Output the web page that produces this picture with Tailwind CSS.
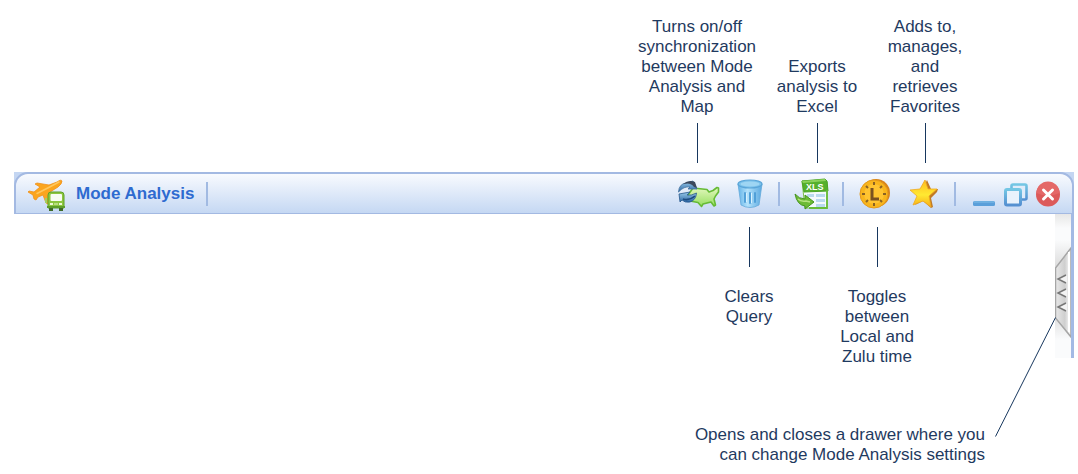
<!DOCTYPE html>
<html lang="en">
<head>
<meta charset="utf-8">
<meta name="viewport" content="width=device-width, initial-scale=1">
<title>Mode Analysis toolbar</title>
<script src="https://cdn.jsdelivr.net/npm/@tailwindcss/browser@4"></script>
</head>
<body class="bg-white font-['Liberation_Sans',Arial,sans-serif] text-[17px] leading-5 text-[#1f3a60]">
<main class="flex flex-col">
  <!-- Callouts above the toolbar -->
  <section class="flex h-[172px] items-end justify-end pr-[113px] pb-[9px] text-center">
    <div class="flex w-32 flex-col items-center gap-1.5">
      <p>Turns on/off<br>synchronization<br>between Mode<br>Analysis and<br>Map</p>
      <span class="h-10 w-px bg-[#17375e]"></span>
    </div>
    <div class="flex w-28 flex-col items-center gap-1.5">
      <p>Exports<br>analysis to<br>Excel</p>
      <span class="h-10 w-px bg-[#17375e]"></span>
    </div>
    <div class="ml-3 flex w-20 flex-col items-center gap-1.5">
      <p>Adds to,<br>manages,<br>and<br>retrieves<br>Favorites</p>
      <span class="h-10 w-px bg-[#17375e]"></span>
    </div>
  </section>

  <!-- Toolbar -->
  <header class="mr-1 ml-3.5 bg-[#c4d6f2]">
    <div class="flex h-[42px] items-center rounded-t-[14px] border-x-2 border-t-2 border-b border-[#a3b9e2] bg-linear-to-b from-[#f8fafe] to-[#c5d8f3] pr-3 pl-3">
      <svg class="h-[34px] w-[38px] shrink-0" viewBox="0 0 38 34" aria-hidden="true">
        <path d="M29 5Q33 2 34 4 34 7 30 10L22 15 20 27 18 26 15 18 10 20 8 23 6 22 5 18 0 15 1 14 6 15 12 10 7 7 9 6 21 8Z" fill="#fba51f" stroke="#f0901a" stroke-width=".8" stroke-linejoin="round"/>
        <path d="M9 16.500Q20 11 31 5" fill="none" stroke="#ffc75e" stroke-width="1.500" stroke-linecap="round"/>
        <path d="M20 31V18q0-3 3-3h10q3 0 3 3v13Z" fill="#8cc63f" stroke="#5fa02a" stroke-linejoin="round"/>
        <rect x="22.500" y="17" width="11.500" height="7" rx="1" fill="#f8fcf3"/>
        <path d="M17 21h2v5h-2z" fill="#a2cf62"/>
        <path d="M22 27h3m6 0h3" stroke="#eef9d6" stroke-width="2"/>
        <path d="M26 27h4" stroke="#c7e69a" stroke-width="1.500"/>
        <path d="M19 29h18v2H19Z" fill="#5c9d29"/>
        <path d="M21 31h4v3h-4zm10 0h4v3h-4z" fill="#3f6a28"/>
      </svg>
      <h1 class="ml-2.5 text-[17px] leading-5 font-bold whitespace-nowrap text-[#2e6bd0]">Mode Analysis</h1>
      <span class="ml-3 h-6 w-0.5 bg-[#a1bae2]"></span>

      <div class="ml-auto flex items-center">
        <button type="button" aria-label="Synchronize map" class="h-7 w-[42px]">
          <svg class="h-7 w-[42px]" viewBox="0 0 42 28">
            <defs><linearGradient id="land" x2="0" y2="1"><stop stop-color="#e3f7bd"/><stop offset="1" stop-color="#96df60"/></linearGradient><linearGradient id="arr" x2="0" y2="1"><stop stop-color="#9bcbea"/><stop offset="1" stop-color="#2b66a4"/></linearGradient></defs>
            <path d="M15 8 29 9.500 31 12 35 10.500 39 7.500 40.500 8 40.500 12 37.500 16 36 19 37.500 25 36 26 33 22 29 23 25 24 23.500 26.500 20 22.500 12 21 10 15Z" fill="url(#land)" stroke="#66bb35" stroke-width="1.600" stroke-linejoin="round"/>
            <path d="M.5 12Q1 4 8 3L15 1 19 9 10 9 12 7Q6 6 .5 12Z" fill="url(#arr)" stroke="#3d6d9c" stroke-width=".8"/>
            <path d="M5 4Q11-1 17 2l2 6-3-1Q13 2 5 4Z" fill="#3b485c"/>
            <path d="M1 14 12 12 9 15Q13 16 18.500 13 18 20 12 22 7 23 4 20L2 22Z" fill="url(#arr)" stroke="#25578d" stroke-width=".8"/>
            <path d="M5 19Q11 21 17 16" fill="none" stroke="#1d4a80" stroke-width="1.600"/>
          </svg>
        </button>
        <button type="button" aria-label="Clear query" class="ml-[17px] h-[30px] w-[26px]">
          <svg class="h-[30px] w-[26px]" viewBox="0 0 26 30">
            <defs><linearGradient id="bin"><stop stop-color="#62b3e8"/><stop offset=".4" stop-color="#b3e2fb"/><stop offset="1" stop-color="#5ba9e0"/></linearGradient></defs>
            <path d="M1 5 4 26Q13 31 22 26L25 5Z" fill="url(#bin)" stroke="#64a9db" stroke-width=".8"/>
            <ellipse cx="13" cy="5" rx="12" ry="4" fill="#7cc2eb" stroke="#5aa5d8" stroke-width="1.200"/>
            <ellipse cx="13" cy="5" rx="9.500" ry="2.600" fill="#9ed5f3"/>
            <path d="M8 14v9M13 14v10M18 14v9" fill="none" stroke="#4b9cd6" stroke-width="1.800" stroke-linecap="round"/>
            <path d="M9.500 14v9M14.500 14v10" stroke="#d8f2ff"/>
          </svg>
        </button>
        <span class="ml-[15px] h-6 w-0.5 bg-[#a1bae2]"></span>
        <button type="button" aria-label="Export to Excel" class="ml-3.5 h-8 w-9">
          <svg class="h-8 w-9" viewBox="0 0 36 32">
            <path d="M8 3 33 4v26L11 30Z" fill="#f4f9fd" stroke="#7cc04c"/>
            <path d="M8 3 31 1l2 2 1 10-24 1Z" fill="#55b02c" stroke="#4ba326"/>
            <path d="M8 3 31 1l1 2-23 2Z" fill="#8bd25a"/>
            <path d="M13 16h7v3h-7zm9 0h9v3h-9zm0 5h9v3h-9zm0 5h9v3h-9z" fill="#b9d9ef"/>
            <path d="M33 12v18H15" fill="none" stroke="#69bd39" stroke-width="1.800"/>
            <text x="12" y="12" font-family="Liberation Sans" font-size="9" font-weight="700" fill="#fff">XLS</text>
            <path d="M1 16Q5 21 11 21v-4l9 7-9 7v-3Q3 27 1 16Z" fill="#6dbb34" stroke="#46941f"/>
            <path d="M4 21q3 3 8 2l4 1" fill="none" stroke="#b5e37c" stroke-width="1.500"/>
          </svg>
        </button>
        <span class="ml-3 h-6 w-0.5 bg-[#a1bae2]"></span>
        <button type="button" aria-label="Toggle local and Zulu time" class="ml-[15px] size-8">
          <svg class="size-8" viewBox="0 0 32 32">
            <circle cx="17" cy="15" r="14" fill="#d8841a"/>
            <circle cx="15" cy="16" r="14" fill="#f8b51d" stroke="#e49a1c"/>
            <circle cx="15" cy="16" r="10" fill="#ffc431"/>
            <path d="M15 4v3M15 25v3M3 16h3M24 16h3M7 8l2 2M23 8l-2 2M7 24l2-2M23 24l-2-2" stroke="#8a6225" stroke-width="2"/>
            <path d="M13 10v11h7" fill="none" stroke="#7a5120" stroke-width="3"/>
          </svg>
        </button>
        <button type="button" aria-label="Favorites" class="ml-[19px] h-[30px] w-7">
          <svg class="h-[30px] w-7" viewBox="0 0 28 30">
            <defs><linearGradient id="gold" x2="0" y2="1"><stop stop-color="#ffbb1e"/><stop offset=".55" stop-color="#ffe932"/><stop offset="1" stop-color="#f8ad16"/></linearGradient></defs>
            <path d="M17 1 21 10 28 10 27 13 21 19 23 28 21 29 13 22 5 26Z" fill="#c07a26"/>
            <path d="M15 1 18 10 27 10 19 17 21 28 13 22 3 26 7 17 0 11 10 10Z" fill="url(#gold)" stroke="#f0aa20" stroke-width=".8" stroke-linejoin="round"/>
          </svg>
        </button>
        <span class="ml-4 h-6 w-0.5 bg-[#a1bae2]"></span>
        <button type="button" aria-label="Minimize" class="ml-4 h-6 w-6">
          <svg class="size-6" viewBox="0 0 24 24"><rect x="1" y="19" width="22" height="5" rx="1.500" fill="#5a9fda"/><path d="M2 20h20" stroke="#83c0e8"/></svg>
        </button>
        <button type="button" aria-label="Restore" class="ml-2 size-6">
          <svg class="size-6 overflow-visible" viewBox="0 0 24 24">
            <defs><linearGradient id="win" x2="0" y2="1"><stop stop-color="#73c6e4"/><stop offset="1" stop-color="#5590d1"/></linearGradient></defs>
            <rect x="7.500" y="2.500" width="15" height="15" rx="1.500" fill="#e0ecfa" stroke="url(#win)" stroke-width="2.600"/>
            <rect x="1.500" y="7.500" width="15" height="15.500" rx="1.500" fill="#e9f2fc" stroke="url(#win)" stroke-width="3"/>
          </svg>
        </button>
        <button type="button" aria-label="Close" class="ml-2 size-6">
          <svg class="size-6 overflow-visible" viewBox="0 0 24 24"><circle cx="12" cy="12.500" r="12" fill="#dc5a5a"/><path d="M.5 11a11.500 11.500 0 0 1 23 0Q12 16 .5 11" fill="#e46868"/><path d="m7.500 8 9 9M16.500 8l-9 9" stroke="#fff" stroke-width="3" stroke-linecap="round"/></svg>
        </button>
      </div>
    </div>
  </header>

  <!-- Callouts below the toolbar and the drawer handle -->
  <section class="relative flex justify-end pr-1">
    <div class="flex flex-col items-end pt-[13px]">
      <div class="mr-[130px] flex items-start gap-10 text-center">
        <div class="flex w-20 flex-col items-center gap-5">
          <span class="h-10 w-px bg-[#17375e]"></span>
          <p>Clears<br>Query</p>
        </div>
        <div class="flex w-24 flex-col items-center gap-5">
          <span class="h-10 w-px bg-[#17375e]"></span>
          <p>Toggles<br>between<br>Local and<br>Zulu time</p>
        </div>
      </div>
      <p class="mt-[58px] mr-[70px] text-right whitespace-nowrap">Opens and closes a drawer where you<br>can change Mode Analysis settings</p>
    </div>
    <button type="button" aria-label="Open or close settings drawer" class="flex h-36 shrink-0 border-r-[3px] border-[#a3bae4] bg-[#fafbfc]">
      <svg class="h-36 w-4" viewBox="0 0 16 144">
        <defs>
          <linearGradient id="top" x2="0" y2="1"><stop stop-color="#e7e7e7"/><stop offset="1" stop-color="#fafbfc"/></linearGradient>
          <linearGradient id="handle"><stop stop-color="#e8e8e8"/><stop offset=".6" stop-color="#cfcfcf"/><stop offset="1" stop-color="#fff"/></linearGradient>
          <linearGradient id="shade" x2="0" y2="1"><stop stop-color="#fafbfc"/><stop offset=".3" stop-color="#d9d9d9"/><stop offset=".7" stop-color="#d9d9d9"/><stop offset="1" stop-color="#fafbfc"/></linearGradient>
        </defs>
        <path d="M0 0h16v14H0Z" fill="url(#top)"/>
        <path d="M0 26h16v100H0Z" fill="url(#shade)"/>
        <path d="M16 34 .500 54v50L16 123Z" fill="url(#handle)" stroke="#a6a6a6" stroke-width="1.500"/>
        <path d="M14 38v80" stroke="#fff" stroke-width="2"/>
        <path d="m12 61-8 4 8 4zM12 75l-8 4 8 4zM12 89l-8 4 8 4z" fill="#f3f3f3"/>
        <path d="m11 61-8 4 8 4M11 75l-8 4 8 4M11 89l-8 4 8 4" fill="none" stroke="#777" stroke-width="1.500"/>
      </svg>
    </button>
    <svg class="pointer-events-none absolute top-[103px] right-[22px] h-[120px] w-[61px]" viewBox="0 0 61 120" aria-hidden="true"><path d="M60.500.500.500 119.500" stroke="#17375e" stroke-width="1"/></svg>
  </section>
</main>
</body>
</html>
